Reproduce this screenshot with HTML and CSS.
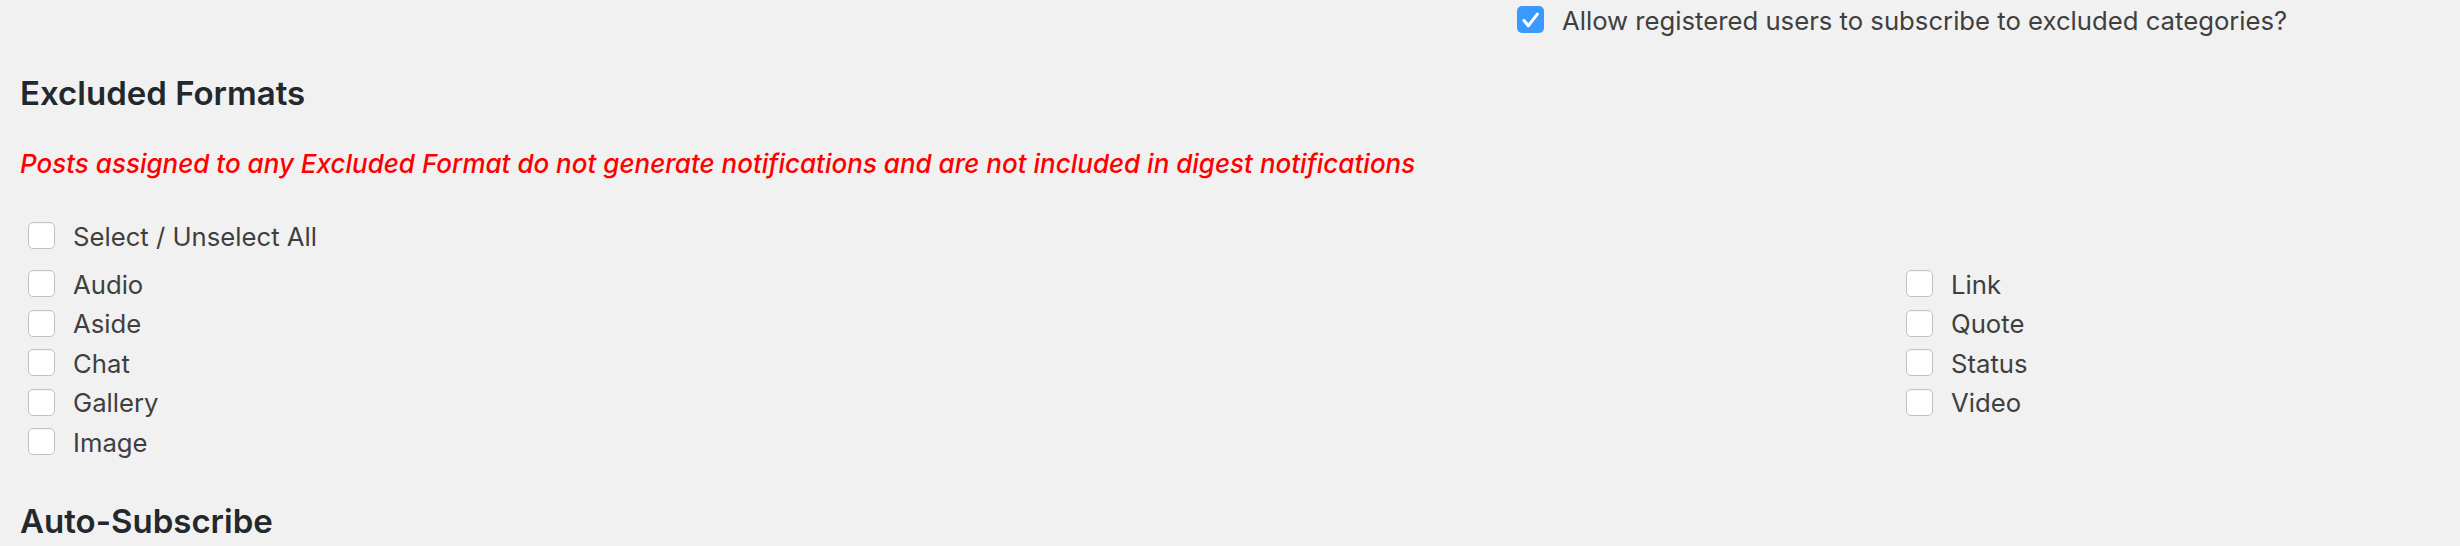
FILE: index.html
```html
<!DOCTYPE html>
<html lang="en">
<head>
<meta charset="utf-8">
<title>Excluded Formats</title>
<link rel="stylesheet" href="styles.css">
</head>
<body>
<div class="page">
  <div class="top-row">
    <label class="option option-top">
      <span class="cb cb-checked">
        <svg viewBox="0 0 27 27" width="27" height="27" aria-hidden="true"><path d="M7 14.5 L11.3 19.8 L20.3 8.2" fill="none" stroke="#fff" stroke-width="3" stroke-linecap="round" stroke-linejoin="round"/></svg>
      </span>
      <span class="label">Allow registered users to subscribe to excluded categories?</span>
    </label>
  </div>

  <h2 class="section-title">Excluded Formats</h2>
  <p class="notice">Posts assigned to any Excluded Format do not generate notifications and are not included in digest notifications</p>

  <div class="formats">
    <label class="option select-all"><span class="cb"></span><span class="label">Select / Unselect All</span></label>
    <div class="format-grid">
      <div class="col">
        <label class="option"><span class="cb"></span><span class="label">Audio</span></label>
        <label class="option"><span class="cb"></span><span class="label">Aside</span></label>
        <label class="option"><span class="cb"></span><span class="label">Chat</span></label>
        <label class="option"><span class="cb"></span><span class="label">Gallery</span></label>
        <label class="option"><span class="cb"></span><span class="label">Image</span></label>
      </div>
      <div class="col">
        <label class="option"><span class="cb"></span><span class="label">Link</span></label>
        <label class="option"><span class="cb"></span><span class="label">Quote</span></label>
        <label class="option"><span class="cb"></span><span class="label">Status</span></label>
        <label class="option"><span class="cb"></span><span class="label">Video</span></label>
      </div>
    </div>
  </div>

  <h2 class="section-title section-next">Auto-Subscribe</h2>
</div>
</body>
</html>
```

FILE: styles.css
```css
html, body {
  margin: 0;
  padding: 0;
  background: #f1f1f1;
}

.page {
  font-family: Inter, "Liberation Sans", Arial, sans-serif;
  color: #444;
  padding: 0 20px;
  height: 546px;
  overflow: hidden;
}

.top-row {
  display: flex;
  padding-left: 1497px;
}

.option {
  display: flex;
  align-items: center;
  gap: 18px;
  height: 39.5px;
  font-size: 25.7px;
  color: #3f3f3f;
  cursor: default;
}

.option-top {
  height: 39px;
}

.label {
  padding-top: 2px;
  line-height: 30px;
  white-space: nowrap;
}

.cb {
  flex: none;
  width: 27px;
  height: 27px;
  box-sizing: border-box;
  border: 1px solid #c2c2c2;
  border-radius: 5px;
  background: #fff;
  box-shadow: inset 0 1px 1px rgba(0,0,0,0.04);
}

.cb-checked {
  border: none;
  background: #3b99fb;
  box-shadow: none;
}

.cb-checked svg {
  display: block;
}

.section-title {
  margin: 34px 0 0;
  font-size: 33px;
  line-height: 40px;
  font-weight: 600;
  color: #23282d;
}

.notice {
  margin: 33px 0 0;
  font-size: 26px;
  line-height: 36px;
  font-style: italic;
  font-weight: 500;
  color: #ff0000;
  white-space: nowrap;
}

.formats {
  margin-top: 34px;
  padding-left: 8px;
}

.select-all {
  margin-bottom: 8.5px;
}

.format-grid {
  display: grid;
  grid-template-columns: 1878px auto;
}

.col {
  display: flex;
  flex-direction: column;
}

.section-next {
  margin-top: 39px;
}
```
